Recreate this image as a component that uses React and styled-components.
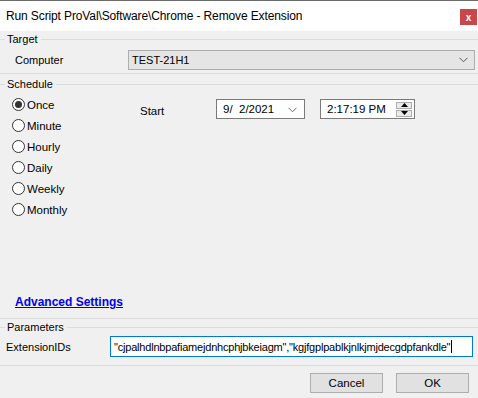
import React from 'react';
import styled, { createGlobalStyle } from 'styled-components';

const Global = createGlobalStyle`
  html, body { margin: 0; padding: 0; background: #f0f0f0; }
  body { font-family: "Liberation Sans", Arial, sans-serif; font-size: 11px; color: #000; }
  * { box-sizing: border-box; }
`;

const Window = styled.div`
  width: 478px;
  height: 398px;
  background: #f0f0f0;
  display: flex;
  flex-direction: column;
  overflow: hidden;
`;

const TitleBar = styled.div`
  height: 31px;
  border-top: 1px solid #6b6b6b;
  background: #ffffff;
  display: flex;
  align-items: center;
  justify-content: space-between;
  padding-left: 6px;
  font-size: 12px;
  letter-spacing: -0.12px;
`;

const CloseBtn = styled.div`
  width: 17px;
  height: 16px;
  margin-right: 1px;
  margin-top: 2px;
  background: #c9474a;
  color: #fff;
  font-weight: bold;
  font-size: 10px;
  display: flex;
  align-items: center;
  justify-content: center;
`;

const Group = styled.div`
  height: ${p => p.h}px;
  display: flex;
  flex-direction: column;
  border-bottom: 1px solid #dcdcdc;
`;

const Legend = styled.div`
  display: flex;
  align-items: center;
  height: 16px;
  margin-top: ${p => p.top || 0}px;
  &::before {
    content: '';
    width: 5px;
    border-top: 1px solid #dcdcdc;
    margin-right: 2px;
  }
  &::after {
    content: '';
    flex: 1;
    border-top: 1px solid #dcdcdc;
    margin-left: 3px;
  }
`;

const Row = styled.div`
  display: flex;
  align-items: center;
  margin-top: ${p => p.top || 0}px;
`;

const Label = styled.div`
  width: ${p => p.w}px;
  padding-left: ${p => p.pl}px;
`;

const Combo = styled.div`
  width: 347px;
  height: 20px;
  border: 1px solid #adadad;
  background: #e5e5e5;
  display: flex;
  align-items: center;
  justify-content: space-between;
  padding: 0 6px 0 3px;
`;

const Chevron = ({ color = '#555' }) => (
  <svg width="9" height="6" viewBox="0 0 9 6">
    <path d="M0.5 0.8 L4.5 4.8 L8.5 0.8" fill="none" stroke={color} strokeWidth="1" />
  </svg>
);

const ScheduleBody = styled.div`
  display: flex;
  margin-top: 2px;
`;

const RadioList = styled.div`
  width: 140px;
  display: flex;
  flex-direction: column;
  padding-left: 12px;
`;

const RadioRow = styled.div`
  height: 21px;
  display: flex;
  align-items: center;
  gap: 2px;
  font-size: 11.5px;
`;

const RadioCircle = styled.span`
  width: 13px;
  height: 13px;
  border: 1px solid #333;
  border-radius: 50%;
  background: #fff;
  display: flex;
  align-items: center;
  justify-content: center;
  &::after {
    content: '';
    width: 7px;
    height: 7px;
    border-radius: 50%;
    background: ${p => (p.checked ? '#333' : 'transparent')};
  }
`;

const StartArea = styled.div`
  display: flex;
  align-items: flex-start;
  padding-top: 5px;
`;

const StartLabel = styled.div`
  width: 76px;
  margin-top: 6px;
  font-size: 11.5px;
`;

const Field = styled.div`
  width: ${p => p.w}px;
  height: 20px;
  border: 1px solid #7a7a7a;
  background: #fff;
  display: flex;
  align-items: center;
  justify-content: space-between;
  padding: 0 2px 0 6px;
  margin-right: ${p => p.mr || 0}px;
  font-size: 11.5px;
`;

const Spin = styled.div`
  display: flex;
  flex-direction: column;
  gap: 1px;
`;

const SpinBtn = styled.div`
  width: 16px;
  height: 7px;
  border: 1px solid #adadad;
  background: #e9e9e9;
  display: flex;
  align-items: center;
  justify-content: center;
`;

const Spacer = styled.div`
  flex: 1;
`;

const AdvLink = styled.a`
  color: #0000ee;
  font-weight: bold;
  font-size: 12px;
  text-decoration: underline;
  padding-left: 15px;
  margin-bottom: 9px;
`;

const ParamInput = styled.div`
  width: 363px;
  height: 21px;
  border: 1px solid #0078d7;
  background: #fff;
  display: flex;
  align-items: center;
  padding-left: 3px;
  font-size: 11px;
  letter-spacing: -0.2px;
  white-space: nowrap;
  overflow: hidden;
`;

const Caret = styled.span`
  display: inline-block;
  width: 1px;
  height: 13px;
  background: #000;
  margin-left: 1px;
`;

const Footer = styled.div`
  flex: 1;
  display: flex;
  justify-content: flex-end;
  align-items: flex-start;
  gap: 13px;
  padding: 7px 9px 0 0;
`;

const Button = styled.div`
  width: 73px;
  height: 20px;
  border: 1px solid #adadad;
  background: #e1e1e1;
  display: flex;
  align-items: center;
  justify-content: center;
  font-size: 11.5px;
`;

const schedules = ['Once', 'Minute', 'Hourly', 'Daily', 'Weekly', 'Monthly'];

export default function App() {
  return (
    <Window>
      <Global />
      <TitleBar>
        <span>Run Script ProVal\Software\Chrome - Remove Extension</span>
        <CloseBtn>x</CloseBtn>
      </TitleBar>

      <Group h={43}>
        <Legend top={0}>Target</Legend>
        <Row top={3}>
          <Label w={128} pl={15}>Computer</Label>
          <Combo>
            <span>TEST-21H1</span>
            <Chevron />
          </Combo>
        </Row>
      </Group>

      <Group h={245}>
        <Legend top={2}>Schedule</Legend>
        <ScheduleBody>
          <RadioList>
            {schedules.map((s, i) => (
              <RadioRow key={s}>
                <RadioCircle checked={i === 0} />
                {s}
              </RadioRow>
            ))}
          </RadioList>
          <StartArea>
            <StartLabel>Start</StartLabel>
            <Field w={89} mr={15}>
              <span>9/&nbsp;&nbsp;2/2021</span>
              <span style={{ marginRight: 5 }}><Chevron color="#666" /></span>
            </Field>
            <Field w={95}>
              <span>2:17:19 PM</span>
              <Spin>
                <SpinBtn>
                  <svg width="7" height="4" viewBox="0 0 7 4"><path d="M0 4 L3.5 0 L7 4 Z" fill="#000" /></svg>
                </SpinBtn>
                <SpinBtn>
                  <svg width="7" height="4" viewBox="0 0 7 4"><path d="M0 0 L3.5 4 L7 0 Z" fill="#000" /></svg>
                </SpinBtn>
              </Spin>
            </Field>
          </StartArea>
        </ScheduleBody>
        <Spacer />
        <AdvLink>Advanced Settings</AdvLink>
      </Group>

      <Group h={47}>
        <Legend top={0}>Parameters</Legend>
        <Row top={1}>
          <Label w={110} pl={6}>ExtensionIDs</Label>
          <ParamInput>
            "cjpalhdlnbpafiamejdnhcphjbkeiagm","kgjfgplpablkjnlkjmjdecgdpfankdle"<Caret />
          </ParamInput>
        </Row>
      </Group>

      <Footer>
        <Button>Cancel</Button>
        <Button>OK</Button>
      </Footer>
    </Window>
  );
}
